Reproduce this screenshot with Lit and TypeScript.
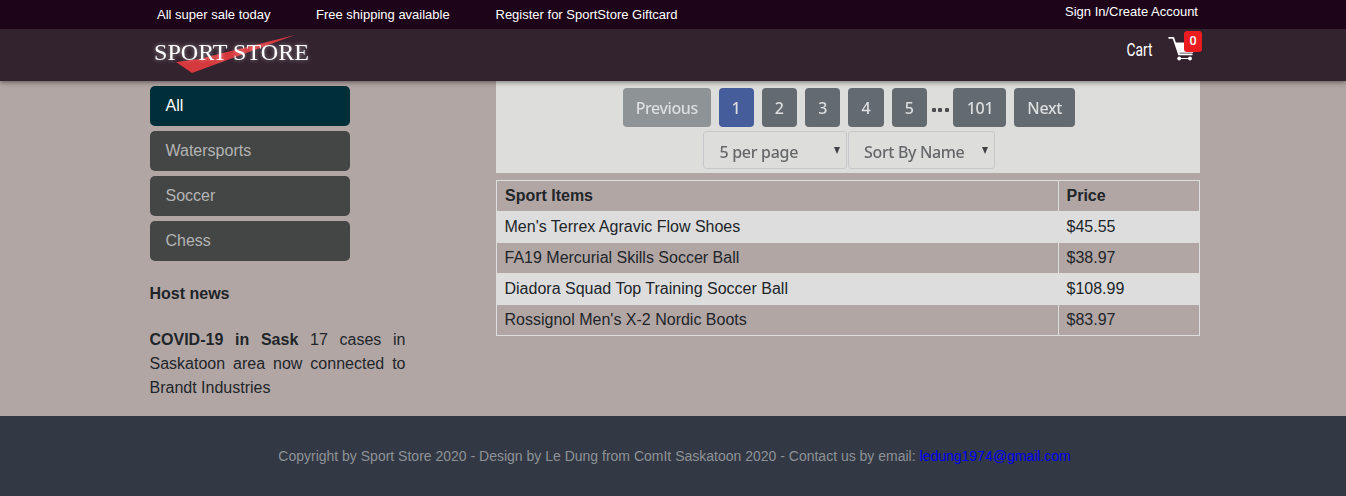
import { LitElement, html, css } from "lit";
import { customElement } from "lit/decorators.js";
import { classMap } from "lit/directives/class-map.js";

const categories = ["All", "Watersports", "Soccer", "Chess"];
const items = [
  ["Men's Terrex Agravic Flow Shoes", "$45.55"],
  ["FA19 Mercurial Skills Soccer Ball", "$38.97"],
  ["Diadora Squad Top Training Soccer Ball", "$108.99"],
  ["Rossignol Men's X-2 Nordic Boots", "$83.97"],
];

@customElement("store-header")
class StoreHeader extends LitElement {
  static styles = css`
    :host { display: block; position: relative; z-index: 2; box-shadow: 0 1px 5px rgba(0, 0, 0, 0.5); }
    .top { height: 29px; box-sizing: border-box; background: #1d0419; color: #fff; font-size: 13px; line-height: 15px; padding: 7px 148px 0 157px; display: flex; }
    .sale { width: 159px; }
    .ship { width: 179.5px; }
    .account { margin-left: auto; margin-top: -3px; }
    .main { height: 52px; background: #33232f; display: flex; justify-content: space-between; padding: 0 138px 0 146px; }
    svg { display: block; }
    .logo-text { font-family: "Liberation Serif", serif; font-size: 24px; fill: #fff; filter: drop-shadow(0 0 2px rgba(255, 255, 255, 0.5)); }
    .cart { display: flex; }
    .cart-text { font-family: Roboto, sans-serif; font-size: 17.5px; fill: #fff; }
    .icon { position: relative; }
    .badge { position: absolute; left: 16px; top: 2px; width: 18px; height: 21px; border-radius: 3px; background: #ea1c20; color: #fff; font-family: Roboto, sans-serif; font-weight: 500; font-size: 12.5px; line-height: 20px; text-align: center; }
  `;
  render() {
    return html`
      <div class="top">
        <span class="sale">All super sale today</span>
        <span class="ship">Free shipping available</span>
        <span>Register for SportStore Giftcard</span>
        <span class="account">Sign In/Create Account</span>
      </div>
      <div class="main">
        <svg width="170" height="52" viewBox="0 0 170 52">
          <path d="M30 33 L53 30 L149 6 L46 44 Z" fill="#d5393d" />
          <text class="logo-text" x="8" y="31" textLength="155" lengthAdjust="spacingAndGlyphs">SPORT STORE</text>
        </svg>
        <div class="cart">
          <svg width="42" height="52" viewBox="0 0 42 52">
            <text class="cart-text" x="0.5" y="27" textLength="26" lengthAdjust="spacingAndGlyphs">Cart</text>
          </svg>
          <div class="icon">
            <svg width="40" height="52" viewBox="0 0 40 52">
              <path d="M.5 8.8H5.3L11 25.3H24.5" fill="none" stroke="#fff" stroke-width="1.8" />
              <path d="M7.2 13.5H28L25 23.8H11Z" fill="#fff" />
              <path d="M11 29.5H23" stroke="#fff" stroke-width="1" />
              <circle cx="11.2" cy="29.5" r="1.9" fill="#fff" />
              <circle cx="22" cy="29.5" r="1.9" fill="#fff" />
            </svg>
            <span class="badge">0</span>
          </div>
        </div>
      </div>
    `;
  }
}

@customElement("store-pager")
class StorePager extends LitElement {
  static styles = css`
    :host { display: block; height: 92px; box-sizing: border-box; padding: 7px 0 0; background: #dddddb; overflow: hidden; font-family: "Noto Sans", sans-serif; font-size: 16px; font-weight: 500; }
    .soft { filter: blur(0.55px); }
    .pages { display: flex; gap: 8px; padding-left: 127px; height: 39px; }
    .btn { width: 35.3px; height: 39px; line-height: 40px; border-radius: 4px; background: #636a70; color: #dcdedf; text-align: center; }
    .prev { width: 87.5px; background: #8e9396; letter-spacing: -0.4px; }
    .next { width: 60.5px; letter-spacing: -0.3px; }
    .last { width: 53px; letter-spacing: -0.3px; }
    .current { background: #465d9b; }
    .dots { width: 18px; margin: 0 -4px 0 -3.5px; display: flex; align-items: center; justify-content: center; gap: 2.5px; padding-top: 4px; box-sizing: border-box; }
    .dots i { width: 4px; height: 4px; border-radius: 1px; background: #4b4d50; }
    .selects { display: flex; gap: 1px; padding: 4px 0 0 206.5px; }
    .select { width: 144.5px; height: 38px; box-sizing: border-box; border: 1.3px solid #c7c8cb; border-radius: 3px; line-height: 40px; color: #66676a; padding: 0 6px 0 16px; display: flex; justify-content: space-between; white-space: nowrap; letter-spacing: -0.3px; }
    .sort { width: 147px; padding-left: 15px; letter-spacing: -0.35px; }
    .arrow { width: 0; height: 0; border: 3.2px solid transparent; border-top: 7px solid #414246; border-bottom: 0; margin-top: 15px; }
  `;
  render() {
    return html`
      <div class="soft">
        <div class="pages">
          <span class="btn prev">Previous</span>
          ${[1, 2, 3, 4, 5].map((n) => html`<span class=${classMap({ btn: true, current: n === 1 })}>${n}</span>`)}
          <span class="dots"><i></i><i></i><i></i></span>
          <span class="btn last">101</span>
          <span class="btn next">Next</span>
        </div>
        <div class="selects">
          <span class="select">5 per page<i class="arrow"></i></span>
          <span class="select sort">Sort By Name<i class="arrow"></i></span>
        </div>
      </div>
    `;
  }
}

@customElement("app-root")
class AppRoot extends LitElement {
  static styles = css`
    :host { display: flex; flex-direction: column; height: 496px; overflow: hidden; background: #b2a6a5; color: #212529; font-family: "Liberation Sans", Arial, sans-serif; font-size: 16px; }
    .content { height: 335px; display: flex; padding-left: 149.5px; }
    aside { width: 346.5px; padding-top: 5px; }
    nav { display: grid; gap: 5px; width: 200px; margin-left: 0.5px; }
    .category { height: 40px; line-height: 39px; padding-left: 15.5px; background: #444645; border-radius: 5px; color: #b4b4b4; }
    .active { background: #002f3a; color: #fff; }
    h2 { font-size: 16px; line-height: 24px; margin: 21px 0 22px; }
    p { margin: 0; width: 256px; line-height: 24px; text-align: justify; }
    .results { width: 704px; }
    table { border-collapse: collapse; width: 704px; margin-top: 7px; table-layout: fixed; }
    th, td { border: 1px solid #dddddd; height: 30px; box-sizing: border-box; padding: 0 8px; text-align: left; line-height: 30px; }
    td { padding-left: 7.5px; }
    th:last-child { width: 141px; box-sizing: border-box; }
    td:last-child, th:last-child { padding-left: 7.5px; }
    tr:nth-child(even) { background: #dddddd; }
    footer { flex: 1; background: #333944; color: #8d9297; font-size: 14px; line-height: 80px; text-align: center; padding-left: 3px; }
    .mail { color: #0000f5; text-decoration: none; }
  `;
  render() {
    return html`
      <store-header></store-header>
      <div class="content">
        <aside>
          <nav>${categories.map((c, i) => html`<a class=${classMap({ category: true, active: i === 0 })}>${c}</a>`)}</nav>
          <h2>Host news</h2>
          <p><b>COVID-19 in Sask</b> 17 cases in Saskatoon area now connected to Brandt Industries</p>
        </aside>
        <main class="results">
          <store-pager></store-pager>
          <table>
            <tbody>
              <tr><th>Sport Items</th><th>Price</th></tr>
              ${items.map(([name, price]) => html`<tr><td>${name}</td><td>${price}</td></tr>`)}
            </tbody>
          </table>
        </main>
      </div>
      <footer>Copyright by Sport Store 2020 - Design by Le Dung from ComIt Saskatoon 2020 - Contact us by email: <a class="mail" href="mailto:ledung1974@gmail.com">ledung1974@gmail.com</a></footer>
    `;
  }
}
